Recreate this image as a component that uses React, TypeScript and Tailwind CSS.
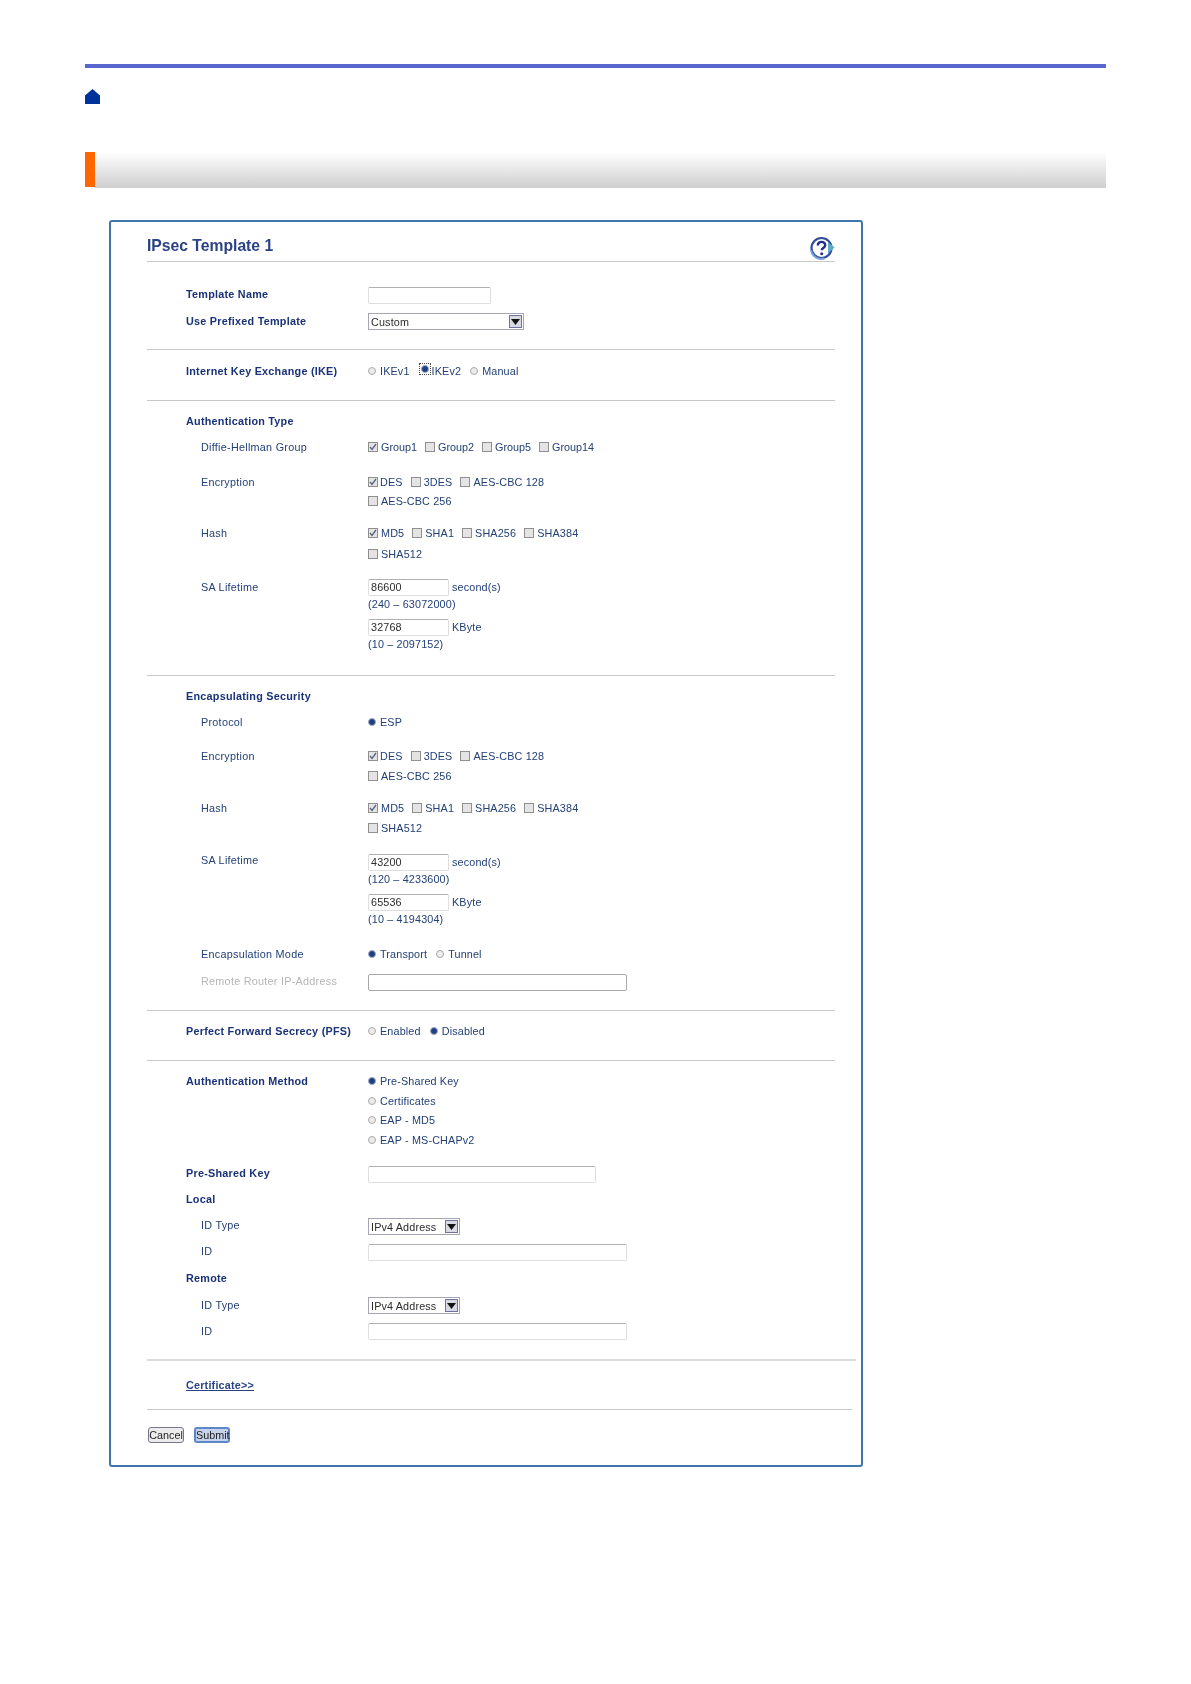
import React from 'react';

const font = 'font-["Liberation_Sans",Arial,sans-serif]';

function Rule({ className = 'w-[688px] h-px bg-[#c9c9c9]' }: { className?: string }) {
  return <div className={className}></div>;
}

function Check({ on = false }: { on?: boolean }) {
  return (
    <span className="w-[10px] h-[10px] shrink-0 border border-[#8f8f8f] bg-[#e4e4e4] flex items-center justify-center">
      {on && (
        <svg width="8" height="8" viewBox="0 0 8 8" fill="none">
          <path d="M1 4l2 2.4L7 1" stroke="#55647f" strokeWidth="1.3" />
        </svg>
      )}
    </span>
  );
}

function Radio({ on = false, focus = false }: { on?: boolean; focus?: boolean }) {
  return (
    <span className={focus ? 'shrink-0 -mt-[3px] border border-dotted border-[#444] p-px' : 'shrink-0'}>
      <span
        className={
          on
            ? 'block w-[8px] h-[8px] rounded-full bg-[#1f3f85] border border-[#9fa9bd]'
            : 'block w-[8px] h-[8px] rounded-full bg-[#ececec] border border-[#a8a8a8]'
        }
      ></span>
    </span>
  );
}

function Opt({ label, check, radio, on, focus, textGap = 'gap-[4px]' }: { label: string; check?: boolean; radio?: boolean; on?: boolean; focus?: boolean; textGap?: string }) {
  return (
    <span className={`flex items-center ${textGap}`}>
      {check && <Check on={on} />}
      {radio && <Radio on={on} focus={focus} />}
      <span>{label}</span>
    </span>
  );
}

function Row({ label, sub, dim, mt = '', children }: { label: string; sub?: boolean; dim?: boolean; mt?: string; children?: React.ReactNode }) {
  const tone = dim
    ? 'pl-[15px] text-[#b5b5b5] font-normal tracking-[0.27px]'
    : sub
      ? 'pl-[15px] text-[#234077] font-normal tracking-[0.27px]'
      : 'text-[#1a3278] font-bold tracking-[0.25px]';
  return (
    <div className={`flex items-start ml-[39px] ${mt}`}>
      <div className={`w-[182px] h-5 leading-5 shrink-0 whitespace-nowrap ${tone}`}>{label}</div>
      <div className="flex flex-col text-[#234077] tracking-[0.15px]">{children}</div>
    </div>
  );
}

function Line({ h = 'h-5', gap = 'gap-[9px]', extra = '', children }: { h?: string; gap?: string; extra?: string; children?: React.ReactNode }) {
  return <div className={`flex items-center ${h} ${gap} ${extra} whitespace-nowrap`}>{children}</div>;
}

function TextBox({ w, value, tone = 'border-[#dedede] border-t-[#b0b0b0]' }: { w: string; value?: string; tone?: string }) {
  return <div className={`${w} h-[17px] rounded-[2px] border ${tone} bg-white pl-[2px] leading-[15px] text-[#2b2b2b]`}>{value}</div>;
}

function Select({ w, value }: { w: string; value: string }) {
  return (
    <div className={`${w} h-[17px] flex items-center justify-between border border-[#a5a5b5] pl-[2px] pr-[1px] text-[#2b2b2b] bg-white`}>
      <span className="pt-px">{value}</span>
      <span className="w-[13px] h-[13px] border border-[#6f6fa0] bg-[#d9d9e4] flex items-center justify-center">
        <svg width="9" height="6" viewBox="0 0 9 6">
          <path d="M0 0h9L4.500 6z" fill="#111" />
        </svg>
      </span>
    </div>
  );
}

function Lifetime({ a, range1, b, range2, top, gap }: { a: string; range1: string; b: string; range2: string; top: string; gap: string }) {
  return (
    <div className={`flex flex-col ${top}`}>
      <div className="flex items-center gap-[3px] h-[17px]">
        <TextBox w="w-[81px]" value={a} />
        <span>second(s)</span>
      </div>
      <div className="h-4 leading-4">{range1}</div>
      <div className={`flex items-center gap-[3px] h-[17px] ${gap}`}>
        <TextBox w="w-[81px]" value={b} />
        <span>KByte</span>
      </div>
      <div className="h-4 leading-4">{range2}</div>
    </div>
  );
}

function HelpIcon() {
  return (
    <svg width="26" height="24" viewBox="0 0 26 24" fill="none">
      <circle cx="12.500" cy="12" r="10" fill="#fff" stroke="#2f4f98" strokeWidth="2.200" />
      <path d="M2 14a10.500 10.500 0 0 0 13.500 8.500" stroke="#7f9fd8" strokeWidth="2" />
      <path d="M19 6l6.500 5.500-6.500 6z" fill="#5fa8c8" />
      <path d="M8.800 9.500c0-5 7.600-4.600 7.400-.2-.1 2.700-3.500 2.700-3.500 5" stroke="#1f2f8a" strokeWidth="2.400" />
      <circle cx="12.700" cy="17.700" r="1.500" fill="#1f2f8a" />
    </svg>
  );
}

export default function App() {
  return (
    <div className={`${font} min-h-[1684px] bg-white pt-[64px] px-[85px] text-[11px] leading-none`}>
      <div className="w-[1021px] h-1 bg-[#5b67d0]"></div>

      {/* home icon */}
      <svg className="mt-[21px] block" width="15" height="15" viewBox="0 0 15 15">
        <path d="M0 6.500L7.500 0 15 6.500V15H0z" fill="#00329b" />
      </svg>

      {/* heading bar */}
      <div className="mt-[48px] w-[1021px] h-[36px] flex">
        <div className="w-[10px] h-[35px] bg-[#ff6600]"></div>
        <div className="flex-1 bg-gradient-to-b from-white to-[#cfcfcf]"></div>
      </div>

      {/* settings panel */}
      <div className="mt-[32px] ml-[24px] w-[754px] h-[1247px] border-2 border-[#3f76ab] rounded-[3px] pl-[36px] text-[10.800px] blur-[0.3px]">
        <div className="pt-[14px] w-[688px] h-[39px] flex items-start justify-between">
          <div className="h-5 leading-5 text-[15.700px] font-bold text-[#2b4385] whitespace-nowrap">IPsec Template 1</div>
          <HelpIcon />
        </div>
        <Rule />

        <div className="pt-[22px] pb-[18px]">
          <Row label="Template Name">
            <div className="mt-[3px]"><TextBox w="w-[123px]" /></div>
          </Row>
          <Row label="Use Prefixed Template" mt="mt-[7px]">
            <div className="mt-[2px]"><Select w="w-[156px]" value="Custom" /></div>
          </Row>
        </div>
        <Rule />

        <div className="pt-[11px] pb-[19px]">
          <Row label="Internet Key Exchange (IKE)">
            <Line>
              <Opt radio label="IKEv1" />
              <Opt radio on focus label="IKEv2" textGap="gap-px" />
              <Opt radio label="Manual" />
            </Line>
          </Row>
        </div>
        <Rule />

        <div className="pt-[10px] pb-[23px]">
          <Row label="Authentication Type" />
          <Row sub label="Diffie-Hellman Group" mt="mt-[6px]">
            <Line gap="gap-[8px]" extra="tracking-normal">
              <Opt check on label="Group1" textGap="gap-[3px]" />
              <Opt check label="Group2" textGap="gap-[3px]" />
              <Opt check label="Group5" textGap="gap-[3px]" />
              <Opt check label="Group14" textGap="gap-[3px]" />
            </Line>
          </Row>
          <Row sub label="Encryption" mt="mt-[15px]">
            <Line h="h-[19px]" gap="gap-[8px]" extra="pt-px">
              <Opt check on label="DES" textGap="gap-[2px]" />
              <Opt check label="3DES" textGap="gap-[3px]" />
              <Opt check label="AES-CBC 128" textGap="gap-[3px]" />
            </Line>
            <Line><Opt check label="AES-CBC 256" textGap="gap-[3px]" /></Line>
          </Row>
          <Row sub label="Hash" mt="mt-[12px]">
            <Line h="h-[21px]" gap="gap-[8px]">
              <Opt check on label="MD5" textGap="gap-[3px]" />
              <Opt check label="SHA1" textGap="gap-[3px]" />
              <Opt check label="SHA256" textGap="gap-[3px]" />
              <Opt check label="SHA384" textGap="gap-[3px]" />
            </Line>
            <Line><Opt check label="SHA512" textGap="gap-[3px]" /></Line>
          </Row>
          <Row sub label="SA Lifetime" mt="mt-[13px]">
            <Lifetime a="86600" range1="(240 – 63072000)" b="32768" range2="(10 – 2097152)" top="mt-[2px]" gap="mt-[7px]" />
          </Row>
        </div>
        <Rule />

        <div className="pt-[10px] pb-[19px]">
          <Row label="Encapsulating Security" />
          <Row sub label="Protocol" mt="mt-[6px]">
            <Line><Opt radio on label="ESP" /></Line>
          </Row>
          <Row sub label="Encryption" mt="mt-[14px]">
            <Line gap="gap-[8px]">
              <Opt check on label="DES" textGap="gap-[2px]" />
              <Opt check label="3DES" textGap="gap-[3px]" />
              <Opt check label="AES-CBC 128" textGap="gap-[3px]" />
            </Line>
            <Line><Opt check label="AES-CBC 256" textGap="gap-[3px]" /></Line>
          </Row>
          <Row sub label="Hash" mt="mt-[12px]">
            <Line gap="gap-[8px]">
              <Opt check on label="MD5" textGap="gap-[3px]" />
              <Opt check label="SHA1" textGap="gap-[3px]" />
              <Opt check label="SHA256" textGap="gap-[3px]" />
              <Opt check label="SHA384" textGap="gap-[3px]" />
            </Line>
            <Line><Opt check label="SHA512" textGap="gap-[3px]" /></Line>
          </Row>
          <Row sub label="SA Lifetime" mt="mt-[12px]">
            <Lifetime a="43200" range1="(120 – 4233600)" b="65536" range2="(10 – 4194304)" top="mt-[4px]" gap="mt-[7px]" />
          </Row>
          <Row sub label="Encapsulation Mode" mt="mt-[17px]">
            <Line>
              <Opt radio on label="Transport" />
              <Opt radio label="Tunnel" />
            </Line>
          </Row>
          <Row dim label="Remote Router IP-Address" mt="mt-[7px]">
            <div className="mt-[3px]"><TextBox w="w-[259px]" tone="border-[#a8a8a8]" /></div>
          </Row>
        </div>
        <Rule />

        <div className="pt-[10px] pb-[19px]">
          <Row label="Perfect Forward Secrecy (PFS)">
            <Line>
              <Opt radio label="Enabled" />
              <Opt radio on label="Disabled" />
            </Line>
          </Row>
        </div>
        <Rule />

        <div className="pt-[10px] pb-[18px]">
          <Row label="Authentication Method">
            <Line><Opt radio on label="Pre-Shared Key" /></Line>
            <Line><Opt radio label="Certificates" /></Line>
            <Line h="h-[19px]"><Opt radio label="EAP - MD5" /></Line>
            <Line><Opt radio label="EAP - MS-CHAPv2" /></Line>
          </Row>
          <Row label="Pre-Shared Key" mt="mt-[13px]">
            <div className="mt-[3px]"><TextBox w="w-[228px]" /></div>
          </Row>
          <Row label="Local" mt="mt-[6px]" />
          <Row sub label="ID Type" mt="mt-[6px]">
            <div className="mt-[3px]"><Select w="w-[92px]" value="IPv4 Address" /></div>
          </Row>
          <Row sub label="ID" mt="mt-[6px]">
            <div className="mt-[3px]"><TextBox w="w-[259px]" /></div>
          </Row>
          <Row label="Remote" mt="mt-[7px]" />
          <Row sub label="ID Type" mt="mt-[7px]">
            <div className="mt-[2px]"><Select w="w-[92px]" value="IPv4 Address" /></div>
          </Row>
          <Row sub label="ID" mt="mt-[6px]">
            <div className="mt-[2px]"><TextBox w="w-[259px]" /></div>
          </Row>
        </div>
        <Rule className="w-[709px] h-[2px] bg-[#dcdcdc]" />

        <div className="pt-[14px] pl-[39px] h-[48px]">
          <a className="block w-fit h-5 leading-5 font-bold text-[#2b4385] underline tracking-[0.2px]">Certificate&gt;&gt;</a>
        </div>
        <Rule className="w-[705px] h-px bg-[#c9c9c9]" />

        <div className="pt-[17px] flex gap-[10px] pl-px">
          <button className="w-[36px] h-[16px] rounded-[3px] border border-[#77778a] bg-[#ececec] text-[#222] leading-none">Cancel</button>
          <button className="w-[36px] h-[16px] rounded-[3px] border-2 border-[#5f86c8] bg-[#c7d3ea] text-[#222] leading-none">Submit</button>
        </div>
      </div>
    </div>
  );
}
